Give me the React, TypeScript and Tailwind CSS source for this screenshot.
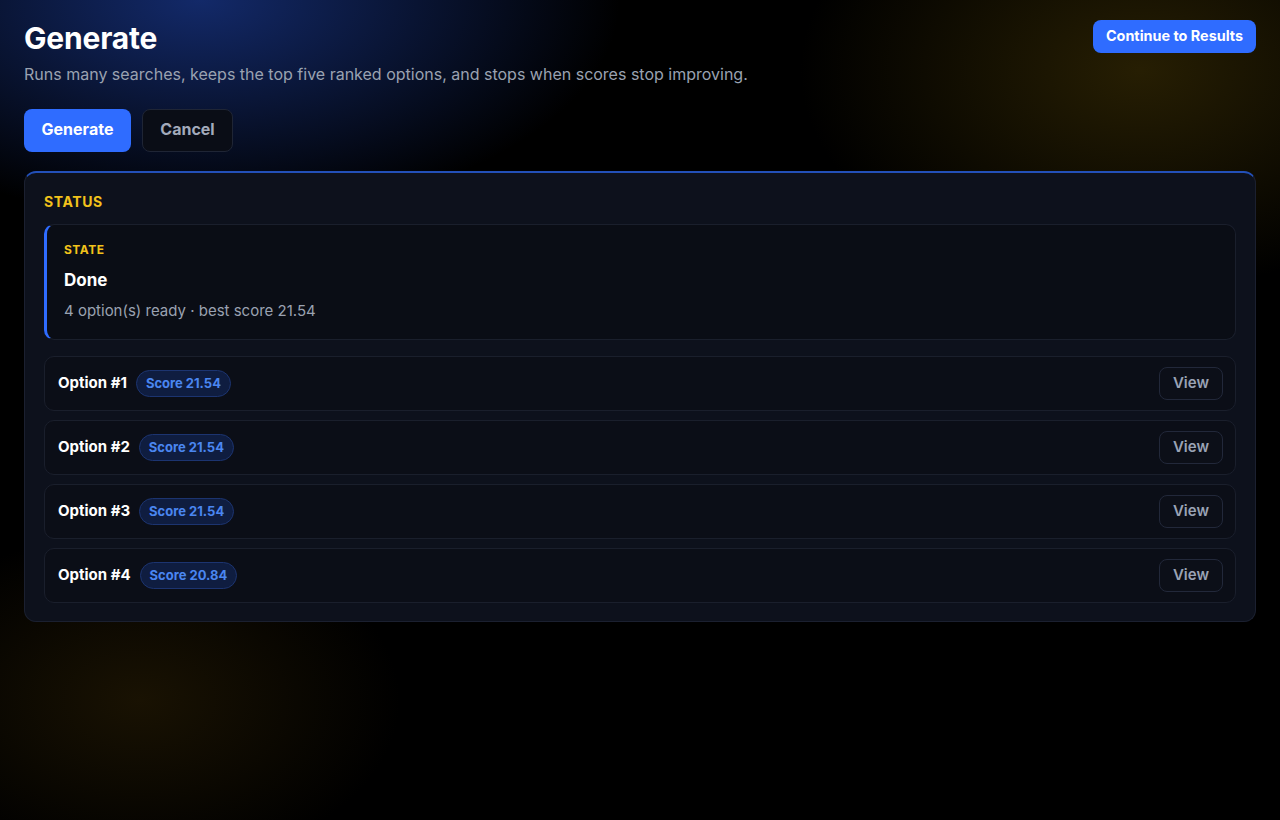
import React from "react";

type Option = { id: number; score: string };

const options: Option[] = [
  { id: 1, score: "21.54" },
  { id: 2, score: "21.54" },
  { id: 3, score: "21.54" },
  { id: 4, score: "20.84" },
];

function OptionRow({ option }: { option: Option }) {
  return (
    <div className="flex h-[55px] items-center justify-between rounded-[10px] border border-[#1a1f2c] bg-[#0b0e17] pl-[13px] pr-[12px]">
      <div className="flex items-center gap-[9px]">
        <span className="text-[15px] font-bold text-white">Option #{option.id}</span>
        <span className="flex h-[27px] items-center rounded-full border border-[#1c3470] bg-[#0f1d40] px-[9px] text-[13px] font-bold text-[#4a86f0]">
          Score {option.score}
        </span>
      </div>
      <button className="h-[33px] rounded-[8px] border border-[#22283a] bg-[#0c0f18] px-[13px] text-[15px] font-semibold text-[#9aa3b5]">
        View
      </button>
    </div>
  );
}

export default function App() {
  return (
    <div
      className="relative min-h-[820px] w-full overflow-hidden bg-black text-white"
      style={{ fontFamily: "Inter, 'Noto Sans', sans-serif" }}
    >
      {/* ambient glows */}
      <div className="pointer-events-none absolute inset-0 bg-[radial-gradient(ellipse_420px_220px_at_200px_0px,rgba(25,55,140,0.75),transparent)]" />
      <div className="pointer-events-none absolute inset-0 bg-[radial-gradient(ellipse_340px_220px_at_1140px_70px,rgba(70,55,5,0.55),transparent)]" />
      <div className="pointer-events-none absolute inset-0 bg-[radial-gradient(ellipse_260px_170px_at_140px_700px,rgba(50,36,5,0.5),transparent)]" />

      <div className="relative px-[24px] pt-[20px]">
        <div className="flex items-start justify-between">
          <div>
            <h1 className="text-[30px] font-bold leading-[36px] tracking-[-0.2px] text-white">Generate</h1>
            <p className="mt-[7px] text-[16px] leading-[22px] text-[#9aa2b1]">
              Runs many searches, keeps the top five ranked options, and stops when scores stop improving.
            </p>
          </div>
          <button className="h-[33px] rounded-[8px] bg-[#2f6cff] px-[13px] pb-[2px] text-[14.4px] font-bold text-white">
            Continue to Results
          </button>
        </div>

        <div className="mt-[24px] flex gap-[11px]">
          <button className="h-[43px] w-[107px] rounded-[8px] bg-[#2f6cff] pb-[3px] text-[16px] font-bold text-white">
            Generate
          </button>
          <button className="h-[43px] w-[91px] rounded-[8px] border border-[#1f2535] bg-[#0a0d16] pb-[3px] text-[16px] font-bold text-[#a3aabb]">
            Cancel
          </button>
        </div>

        <div className="mt-[19px] rounded-[12px] border border-[#1b2030] border-t-2 border-t-[#2350b8] bg-[#0d111c] px-[19px] pb-[18px] pt-[18px]">
          <div className="text-[14px] font-bold tracking-[0.6px] text-[#f2c21b]">STATUS</div>

          <div className="mt-[12px] rounded-[10px] border border-[#1a1f2c] border-l-[3px] border-l-[#2f6cff] bg-[#0a0d15] pb-[17px] pl-[17px] pt-[17px]">
            <div className="text-[12px] font-bold leading-[16px] tracking-[0.5px] text-[#f2c21b]">STATE</div>
            <div className="mt-[10px] text-[17px] font-bold leading-[24px] text-white">Done</div>
            <div className="mt-[8px] text-[15px] leading-[22px] text-[#9aa2b1]">4 option(s) ready · best score 21.54</div>
          </div>

          <div className="mt-[16px] flex flex-col gap-[9px]">
            {options.map((o) => (
              <OptionRow key={o.id} option={o} />
            ))}
          </div>
        </div>
      </div>
    </div>
  );
}
